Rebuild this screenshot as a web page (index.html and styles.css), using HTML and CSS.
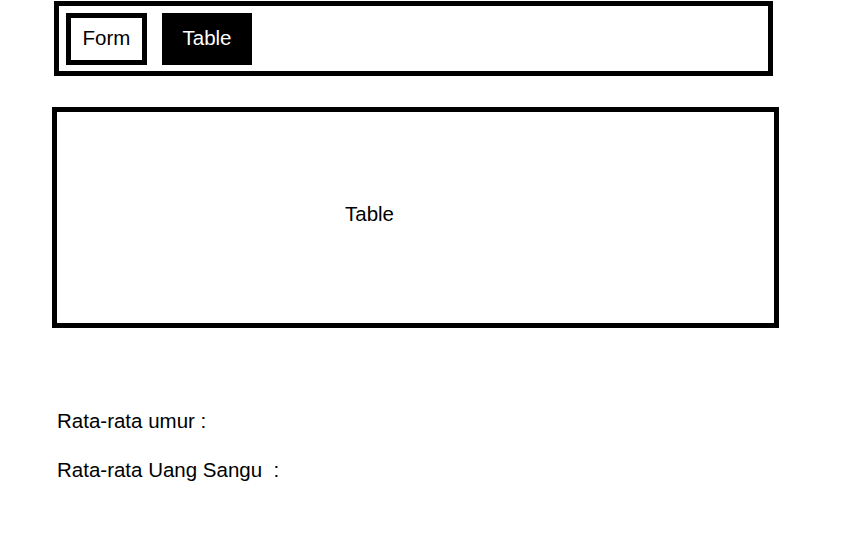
FILE: index.html
```html
<!DOCTYPE html>
<html>
<head>
<meta charset="utf-8">
<link rel="stylesheet" href="styles.css">
</head>
<body>
<nav class="nav">
  <div class="btn btn-form">Form</div>
  <div class="btn btn-table">Table</div>
</nav>
<section class="table-box">
  <span class="table-label">Table</span>
</section>
<div class="stats">
  <p class="stat">Rata-rata umur :</p>
  <p class="stat">Rata-rata Uang Sangu&nbsp; :</p>
</div>
</body>
</html>
```
FILE: styles.css
```css
* { box-sizing: border-box; }
html, body { margin: 0; padding: 0; background: #fff; }
body {
  font-family: "Liberation Sans", Arial, sans-serif;
  font-size: 20.5px;
  color: #000;
}
.nav {
  margin: 1px 0 0 54px;
  width: 719px;
  height: 75px;
  border: 5px solid #000;
  display: flex;
  align-items: center;
  gap: 15px;
  padding: 0 0 0 7px;
}
.btn {
  height: 52px;
  display: flex;
  align-items: center;
  justify-content: center;
  line-height: 23px;
  padding-bottom: 2px;
}
.btn-form {
  width: 81px;
  border: 5px solid #000;
  background: #fff;
  color: #000;
}
.btn-table {
  width: 90px;
  background: #000;
  color: #fff;
}
.table-box {
  margin: 31px 0 0 52px;
  width: 727px;
  height: 221px;
  border: 5px solid #000;
  display: flex;
  align-items: center;
  padding: 0 0 9px 288px;
}
.table-label { line-height: 23px; }
.stats {
  margin-top: 81px;
  padding-left: 57px;
}
.stat {
  margin: 0 0 26px 0;
  line-height: 23px;
}
```
